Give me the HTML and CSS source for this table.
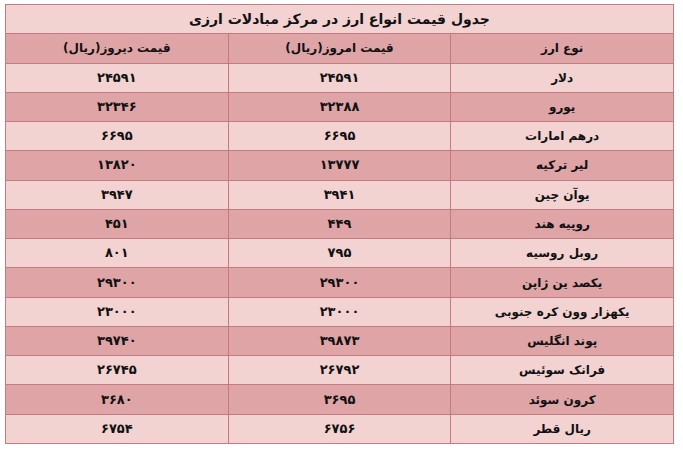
FILE: index.html
```html
<!DOCTYPE html>
<html lang="fa" dir="rtl">
<head>
<meta charset="utf-8">
<link rel="stylesheet" href="styles.css">
</head>
<body>
<table class="rates">
  <tr class="title"><td colspan="3">جدول قیمت انواع ارز در مرکز مبادلات ارزی</td></tr>
  <tr class="dark head"><td>نوع ارز</td><td>قیمت امروز(ریال)</td><td>قیمت دیروز(ریال)</td></tr>
  <tr class="light"><td>دلار</td><td class="num">۲۴۵۹۱</td><td class="num">۲۴۵۹۱</td></tr>
  <tr class="dark"><td>یورو</td><td class="num">۳۲۳۸۸</td><td class="num">۳۲۳۴۶</td></tr>
  <tr class="light"><td>درهم امارات</td><td class="num">۶۶۹۵</td><td class="num">۶۶۹۵</td></tr>
  <tr class="dark"><td>لیر ترکیه</td><td class="num">۱۳۷۷۷</td><td class="num">۱۳۸۲۰</td></tr>
  <tr class="light"><td>یوآن چین</td><td class="num">۳۹۴۱</td><td class="num">۳۹۴۷</td></tr>
  <tr class="dark"><td>روپیه هند</td><td class="num">۴۴۹</td><td class="num">۴۵۱</td></tr>
  <tr class="light"><td>روبل روسیه</td><td class="num">۷۹۵</td><td class="num">۸۰۱</td></tr>
  <tr class="dark"><td>یکصد ین ژاپن</td><td class="num">۲۹۳۰۰</td><td class="num">۲۹۳۰۰</td></tr>
  <tr class="light"><td>یکهزار وون کره جنوبی</td><td class="num">۲۳۰۰۰</td><td class="num">۲۳۰۰۰</td></tr>
  <tr class="dark"><td>پوند انگلیس</td><td class="num">۳۹۸۷۳</td><td class="num">۳۹۷۴۰</td></tr>
  <tr class="light"><td>فرانک سوئیس</td><td class="num">۲۶۷۹۲</td><td class="num">۲۶۷۴۵</td></tr>
  <tr class="dark"><td>کرون سوئد</td><td class="num">۳۶۹۵</td><td class="num">۳۶۸۰</td></tr>
  <tr class="light"><td>ریال قطر</td><td class="num">۶۷۵۶</td><td class="num">۶۷۵۴</td></tr>
</table>
</body>
</html>
```
FILE: styles.css
```css
html, body {
  margin: 0;
  padding: 0;
  background: #ffffff;
}
body {
  padding: 4px 9px 0 6px;
}
.rates {
  width: 669px;
  border-collapse: collapse;
  direction: rtl;
  font-family: "DejaVu Sans", sans-serif;
  font-weight: bold;
  font-size: 12px;
  line-height: 16px;
  color: #111;
}
.rates td {
  border: 1px solid #c47a80;
  text-align: center;
  vertical-align: middle;
  height: 28.27px;
  padding: 0;
  width: 33.33%;
}
.rates td.num {
  font-size: 13px;
}
.title td {
  background: #f2d3d2;
  font-size: 14px;
}
.light td {
  background: #f2d3d2;
}
.dark td {
  background: #dfa4a6;
}
```
